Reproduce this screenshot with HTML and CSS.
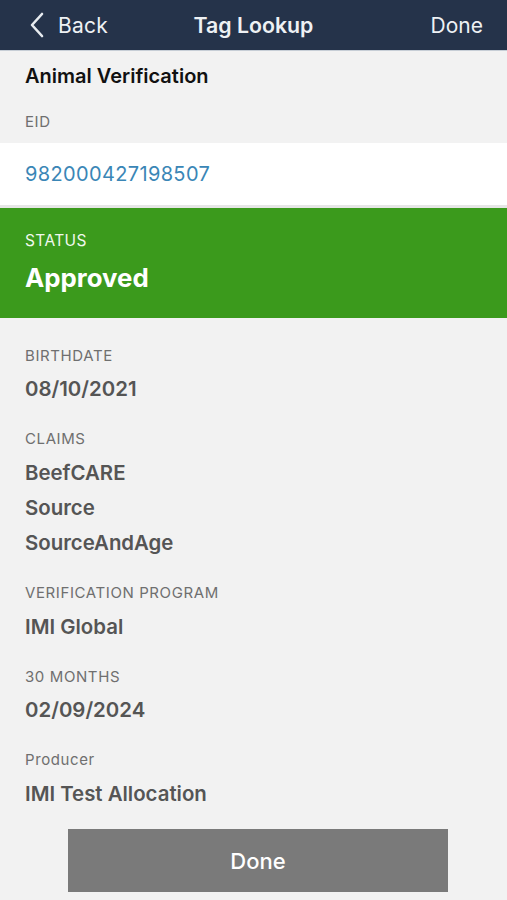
FILE: index.html
```html
<!DOCTYPE html>
<html>
<head>
<meta charset="utf-8">
<link rel="stylesheet" href="styles.css">
</head>
<body>
<div class="screen">
  <header class="nav">
    <div class="nav-left">
      <svg class="chev" width="16" height="26" viewBox="0 0 16 26"><path d="M13 2 L3 13 L13 24" fill="none" stroke="#e8ecf0" stroke-width="2.6" stroke-linecap="round" stroke-linejoin="round"/></svg>
      <span class="nav-back">Back</span>
    </div>
    <div class="nav-title">Tag Lookup</div>
    <div class="nav-right">Done</div>
  </header>

  <section class="head">
    <div class="section-title">Animal Verification</div>
    <div class="label">EID</div>
  </section>

  <div class="eid-row">
    <span class="eid">982000427198507</span>
  </div>
  <div class="sep"></div>

  <section class="status">
    <div class="label status-label">STATUS</div>
    <div class="status-value">Approved</div>
  </section>

  <section class="fields">
    <div class="field">
      <div class="label">BIRTHDATE</div>
      <div class="value">08/10/2021</div>
    </div>
    <div class="field">
      <div class="label">CLAIMS</div>
      <div class="value">BeefCARE</div>
      <div class="value">Source</div>
      <div class="value">SourceAndAge</div>
    </div>
    <div class="field">
      <div class="label">VERIFICATION PROGRAM</div>
      <div class="value">IMI Global</div>
    </div>
    <div class="field">
      <div class="label">30 MONTHS</div>
      <div class="value">02/09/2024</div>
    </div>
    <div class="field">
      <div class="label">Producer</div>
      <div class="value">IMI Test Allocation</div>
    </div>
  </section>

  <div class="btn-wrap">
    <button class="done-btn">Done</button>
  </div>
</div>
</body>
</html>
```
FILE: styles.css
```css
* { box-sizing: border-box; margin: 0; padding: 0; }
html, body { width: 507px; height: 900px; overflow: hidden; }
body {
  background: #f2f2f2;
  font-family: "Inter", "Roboto", "Liberation Sans", sans-serif;
}
.screen { display: flex; flex-direction: column; }

.nav {
  height: 51px;
  background: #25334a;
  border-bottom: 1px solid #c7ced6;
  display: grid;
  grid-template-columns: 1fr auto 1fr;
  align-items: center;
  color: #eef1f4;
}
.nav-left { display: flex; align-items: center; padding-left: 29px; gap: 13px; }
.chev { display: block; }
.nav-back { font-size: 21px; font-weight: 400; letter-spacing: 0.2px; }
.nav-title { font-size: 21.3px; font-weight: 600; text-align: center; }
.nav-right { text-align: right; padding-right: 24px; font-size: 21px; font-weight: 400; }

.head { padding: 10px 25px 9px; }
.section-title { font-size: 20px; font-weight: 600; color: #111; line-height: 30px; }
.label { font-size: 15px; color: #6f6f6f; line-height: 24px; letter-spacing: 0.6px; }
.head .label { margin-top: 19px; }

.eid-row {
  height: 62px;
  background: #fff;
  display: flex;
  align-items: center;
  padding-left: 25px;
}
.eid { font-size: 20px; color: #3a86b6; letter-spacing: 0.35px; }
.sep { height: 3px; background: #e6e6e6; }

.status {
  background: #3b9a1c;
  padding: 21px 25px 23px;
}
.status-label { color: #f1f8ee; font-size: 15.5px; letter-spacing: 0.4px; }
.status-value { color: #fff; font-size: 25.8px; font-weight: 700; line-height: 34px; margin-top: 8px; }

.fields { padding: 25.5px 25px 0; display: flex; flex-direction: column; gap: 20.5px; }
.field .label { margin-bottom: 3.6px; }
.value { font-size: 20.4px; font-weight: 600; color: #555; line-height: 35.4px; }

.btn-wrap { display: flex; justify-content: center; padding-left: 9px; margin-top: 18px; }
.done-btn {
  width: 380px;
  height: 63px;
  background: #7a7a7a;
  border: none;
  color: #fff;
  font-family: inherit;
  font-size: 22px;
  font-weight: 500;
}
```
